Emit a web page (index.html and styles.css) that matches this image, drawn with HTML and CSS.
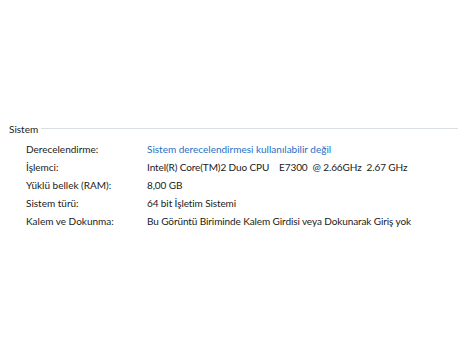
FILE: index.html
```html
<!DOCTYPE html>
<html lang="tr">
<head>
<meta charset="utf-8">
<link rel="stylesheet" href="styles.css">
</head>
<body>
<section class="group">
  <div class="group-head">
    <span class="group-title">Sistem</span>
    <span class="group-rule"></span>
  </div>
  <div class="props">
    <div class="label">Derecelendirme:</div>
    <div class="value"><a class="link" href="#">Sistem derecelendirmesi kullanılabilir değil</a></div>
    <div class="label">İşlemci:</div>
    <div class="value tight">Intel(R) Core(TM)2 Duo CPU    E7300  @ 2.66GHz  2.67 GHz</div>
    <div class="label">Yüklü bellek (RAM):</div>
    <div class="value tight">8,00 GB</div>
    <div class="label">Sistem türü:</div>
    <div class="value tight">64 bit İşletim Sistemi</div>
    <div class="label">Kalem ve Dokunma:</div>
    <div class="value tight">Bu Görüntü Biriminde Kalem Girdisi veya Dokunarak Giriş yok</div>
  </div>
</section>
</body>
</html>
```
FILE: styles.css
```css
html, body {
  margin: 0;
  padding: 0;
  background: #ffffff;
}
body {
  font-family: "Lato", "Open Sans", sans-serif;
  font-size: 10px;
  color: #1a1a1a;
}
.group {
  padding-top: 121px;
}
.group-head {
  display: flex;
  align-items: flex-start;
  padding-left: 9px;
  gap: 3px;
  height: 16px;
}
.group-title {
  line-height: 16px;
}
.group-rule {
  flex: 1;
  height: 1px;
  background: #d9dee2;
  margin-top: 7px;
}
.props {
  display: grid;
  grid-template-columns: 121px 1fr;
  grid-auto-rows: 18.2px;
  line-height: 18px;
  padding-left: 26px;
  padding-top: 2.6px;
}
.value {
  white-space: pre;
}
.tight {
  letter-spacing: -0.1px;
}
.link {
  color: #1f6fc5;
  text-decoration: none;
}
```
